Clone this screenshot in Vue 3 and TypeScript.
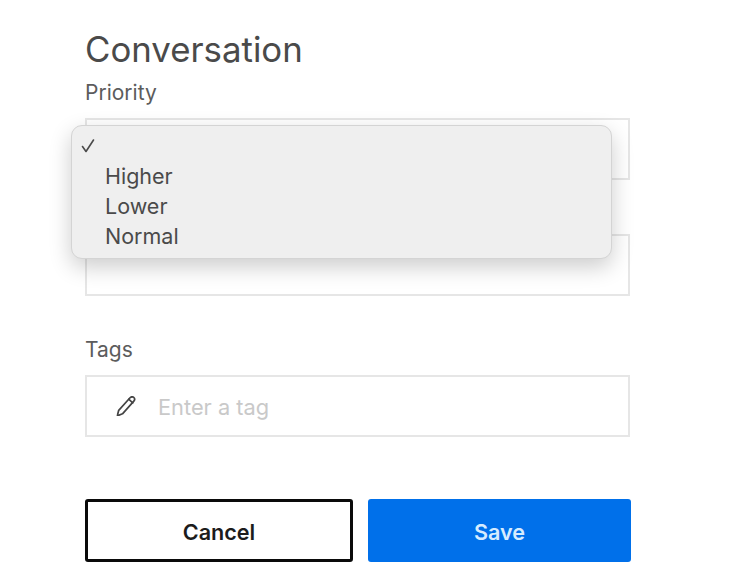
<script setup lang="ts">
const options: string[] = ['Higher', 'Lower', 'Normal']
</script>

<template>
  <div class="page">
    <h1 class="title">Conversation</h1>
    <label class="label">Priority</label>
    <div class="field"></div>
    <div class="field second"></div>
    <label class="label tags">Tags</label>
    <div class="field input">
      <svg class="pencil" width="20" height="20" viewBox="2.6 2.6 14 14.8" fill="none" stroke="#444" stroke-width="1.25" stroke-linejoin="round" stroke-linecap="round">
        <path d="M4.2 13.2 12.6 3.9c.8-.8 1.9-.9 2.7-.2.8.7.8 1.9.1 2.7L7 15.8l-3.3 1.3c-.3.1-.5-.1-.4-.4l.9-3.5Z" />
        <path d="M11.6 5l3 2.7" />
      </svg>
      <span class="placeholder">Enter a tag</span>
    </div>
    <div class="actions">
      <button class="btn cancel">Cancel</button>
      <button class="btn save">Save</button>
    </div>
    <div class="menu">
      <div class="item">
        <svg class="check" width="16" height="16" viewBox="0 0 16 16" fill="none" stroke="#4a4a4a" stroke-width="1.6" stroke-linecap="round" stroke-linejoin="round">
          <path d="M2.5 8.5 6 13.5 13.5 2" />
        </svg>
      </div>
      <div v-for="o in options" :key="o" class="item">{{ o }}</div>
    </div>
  </div>
</template>

<style scoped>
.page {
  position: relative;
  width: 732px;
  height: 585px;
  box-sizing: border-box;
  padding: 29px 0 0 85px;
  background: #fff;
  font-family: Inter, "Liberation Sans", sans-serif;
  overflow: hidden;
}
.title {
  margin: 0;
  font-size: 34.8px;
  line-height: 40px;
  font-weight: 400;
  color: #4a4a4a;
}
.label {
  display: block;
  margin-top: 11px;
  font-size: 21px;
  line-height: 26px;
  color: #5c5c5c;
}
.field {
  box-sizing: border-box;
  width: 545px;
  height: 62px;
  margin-top: 12px;
  border: 2px solid #e6e6e6;
  background: #fff;
}
.second {
  margin-top: 54px;
}
.tags {
  margin-top: 41px;
}
.input {
  display: flex;
  align-items: center;
  margin-top: 12px;
  padding-left: 29px;
}
.pencil {
  flex: none;
}
.placeholder {
  margin-left: 22px;
  margin-top: 2px;
  font-size: 21.8px;
  color: #c9c9c9;
}
.actions {
  display: flex;
  gap: 15px;
  margin-top: 62px;
}
.btn {
  box-sizing: border-box;
  height: 63px;
  border-radius: 3px;
  font-family: inherit;
  font-size: 21.6px;
  font-weight: 600;
  padding: 2px 0 0;
}
.cancel {
  width: 268px;
  border: 3px solid #0a0a0a;
  background: #fff;
  color: #1c1c1c;
}
.save {
  width: 263px;
  border: none;
  background: #0070ea;
  color: #d6ecff;
}
.menu {
  position: absolute;
  left: 71px;
  top: 125px;
  width: 541px;
  height: 134px;
  box-sizing: border-box;
  padding: 5px 0 0 33px;
  background: #efefef;
  border: 1px solid #d4d4d4;
  border-radius: 11px;
  box-shadow: 0 8px 22px rgba(0, 0, 0, 0.2);
}
.item {
  position: relative;
  height: 30px;
  line-height: 30px;
  font-size: 21.5px;
  color: #4a4a4a;
}
.check {
  position: absolute;
  left: -25px;
  top: 7px;
}
</style>
